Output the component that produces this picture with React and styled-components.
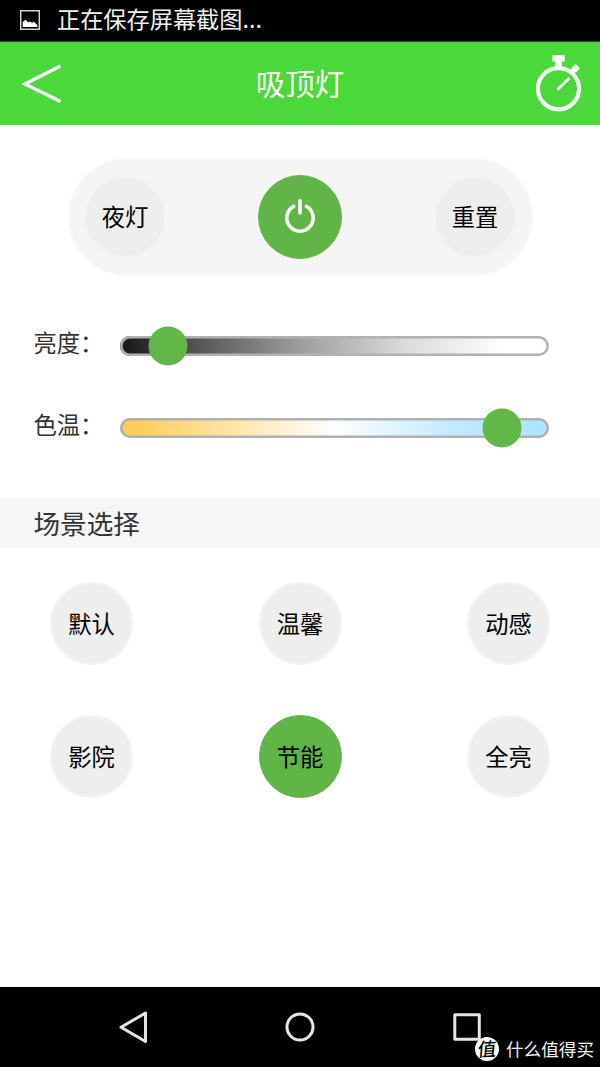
import React from "react";
import styled, { createGlobalStyle } from "styled-components";

const GlobalStyle = createGlobalStyle`
  * { box-sizing: border-box; }
  body {
    margin: 0;
    background: #fff;
    font-family: "Noto Sans CJK SC", "Noto Sans", sans-serif;
  }
  button { font: inherit; border: 0; padding: 0; background: none; }
  svg { display: block; }
`;

const Screen = styled.div`
  width: 600px;
  height: 1067px;
  display: flex;
  flex-direction: column;
  overflow: hidden;
  background: #fff;
`;

const StatusBar = styled.div`
  height: 42px;
  flex: none;
  display: flex;
  align-items: center;
  padding: 0 0 5px 20px;
  gap: 17px;
  background: #000;
  border-bottom: 1px solid #1d4a19;
  color: #f0f0f0;
  font-size: 23.2px;
  line-height: 36px;
  svg { margin-top: 4px; }
`;

const Header = styled.header`
  height: 83px;
  flex: none;
  display: grid;
  grid-template-columns: 100px 1fr 100px;
  align-items: start;
  background: #4ad83a;
  color: #fff;
`;

const Title = styled.h1`
  margin: 18px 0 0;
  font-size: 29.5px;
  font-weight: 400;
  line-height: 44px;
  text-align: center;
`;

const IconButton = styled.button`
  width: 100px;
  height: 83px;
  overflow: hidden;
`;

const PowerPanel = styled.section`
  width: 465px;
  height: 118px;
  flex: none;
  margin: 33px 0 0 68px;
  padding: 0 16px 0 15px;
  border-radius: 59px;
  border: 1px solid #f9f9f9;
  background: #f5f5f5;
  display: flex;
  align-items: center;
  justify-content: space-between;
`;

const RoundButton = styled.button`
  width: ${(p) => p.$size}px;
  height: ${(p) => p.$size}px;
  padding-bottom: ${(p) => (p.$icon ? 0 : 2)}px;
  border-radius: 50%;
  border: ${(p) => (p.$active ? 1 : 2)}px solid ${(p) => (p.$active ? "#61b748" : "#f3f3f3")};
  background: ${(p) => (p.$active ? "#61b546" : "#eee")};
  color: #000;
  display: flex;
  align-items: center;
  justify-content: center;
  font-size: 23.3px;
  line-height: 34px;
`;

const Sliders = styled.section`
  flex: none;
  margin-top: 29px;
  padding-left: 33.5px;
  display: grid;
  grid-auto-rows: 82px;
`;

const SliderRow = styled.div`
  display: flex;
  align-items: center;
  height: 82px;
`;

const SliderLabel = styled.span`
  width: 86.5px;
  margin-top: -9px;
  color: #333;
  font-size: 23.3px;
  line-height: 34px;
  white-space: nowrap;
`;

const Track = styled.div`
  position: relative;
  width: 429px;
  height: 20px;
  border-radius: 10px;
  background: linear-gradient(to right, ${(p) => p.$stops});
  box-shadow: inset 0 0 0 2.6px #b1b0b4;
`;

const Thumb = styled.span`
  position: absolute;
  top: 50%;
  width: 39px;
  height: 39px;
  border-radius: 50%;
  background: #61b748;
  transform: translate(-50%, -50%);
`;

const SectionTitle = styled.h2`
  flex: none;
  height: 50px;
  margin: 29px 0 0;
  padding-left: 33.5px;
  background: #f6f6f6;
  color: #333;
  font-size: 26.6px;
  font-weight: 400;
  line-height: 49px;
`;

const SceneGrid = styled.section`
  flex: 1;
  display: grid;
  grid-template-columns: repeat(3, 83px);
  grid-auto-rows: 83px;
  justify-content: space-between;
  align-content: start;
  row-gap: 50px;
  padding: 34px 50px 0;
`;

const NavBar = styled.nav`
  position: relative;
  height: 80px;
  flex: none;
  background: #000;
  display: flex;
  align-items: center;
  justify-content: space-between;
  padding: 0 116px;
`;

const Watermark = styled.div`
  position: absolute;
  left: 475px;
  top: 50px;
  display: flex;
  align-items: center;
  gap: 7px;
  color: #f4f4f4;
  font-size: 17.6px;
  line-height: 24px;
  white-space: nowrap;
`;

const WatermarkBadge = styled.span`
  width: 24px;
  height: 24px;
  display: flex;
  align-items: center;
  justify-content: center;
  border-radius: 50%;
  background: #fff;
  color: #000;
  font-size: 18.5px;
  font-weight: 500;
  line-height: 24px;
`;

const BadgeGlyph = styled.span`
  transform: translateY(-1px) rotate(-3deg) skewX(-8deg);
`;

const PictureIcon = () => (
  <svg width="20" height="20" viewBox="0 0 20 20">
    <rect x=".75" y=".75" width="18.5" height="18.5" fill="none" stroke="#ddd" strokeWidth="1.4" />
    <path d="M2.7 17V12L5.5 9.7 8.4 12.4 10.2 11.2 12 13 13.8 11.5 17.3 15V17Z" fill="#fff" />
  </svg>
);

const BackIcon = () => (
  <svg width="100" height="83" viewBox="0 1 100 83">
    <path d="M60.5 25 25 43 60.5 60.5" fill="none" stroke="#fff" strokeWidth="3.3" strokeMiterlimit="10" />
  </svg>
);

const StopwatchIcon = () => (
  <svg width="100" height="83" viewBox="0 1 100 83" fill="none" stroke="#fff">
    <circle cx="58.5" cy="47.7" r="20.6" strokeWidth="4.2" />
    <path d="M52.5 14.3H64.8V20.4H61.8V26.5H55.3V20.4H52.5Z" fill="#fff" stroke="none" />
    <path d="M72.2 27 75.8 23.8 79.2 27.2 76 30.6 73.4 30.8 72 29.4Z" fill="#fff" strokeWidth="1.2" strokeLinejoin="round" />
    <path d="M71.8 32 74 29.8" strokeWidth="3.6" />
    <path d="M58.4 47.8 68.6 37.8" strokeWidth="3" strokeLinecap="round" />
  </svg>
);

const PowerIcon = () => (
  <svg width="34" height="38" viewBox="0 0.5 34 38" fill="none" stroke="#fff" strokeLinecap="round">
    <path d="M17 3.2V15.5" strokeWidth="3.6" />
    <path d="M10.6 8.9A13.2 13.2 0 1 0 23.4 8.9" strokeWidth="3.5" />
  </svg>
);

const NavIcon = ({ children }) => (
  <svg width="34" height="34" viewBox="0 0 34 34" fill="none" stroke="#e6e6e6" strokeWidth="3" strokeLinejoin="round">
    {children}
  </svg>
);

const sliders = [
  { label: "亮度：", value: 47.8, stops: "#171717 0%, #242424 4%, #555 18%, #a0a0a0 43%, #dcdcdc 67%, #fff 90%" },
  { label: "色温：", value: 381.5, stops: "#ffcc55 0%, #ffcf5d 5%, #ffe6ae 28%, #fff 50%, #c5eaff 76%, #ace1ff 100%" },
];

const scenes = ["默认", "温馨", "动感", "影院", "节能", "全亮"];

export default function App() {
  return (
    <Screen>
      <GlobalStyle />
      <StatusBar>
        <PictureIcon />
        <span>正在保存屏幕截图...</span>
      </StatusBar>
      <Header>
        <IconButton><BackIcon /></IconButton>
        <Title>吸顶灯</Title>
        <IconButton><StopwatchIcon /></IconButton>
      </Header>
      <PowerPanel>
        <RoundButton $size={82}>夜灯</RoundButton>
        <RoundButton $size={84} $active $icon><PowerIcon /></RoundButton>
        <RoundButton $size={82}>重置</RoundButton>
      </PowerPanel>
      <Sliders>
        {sliders.map((s) => (
          <SliderRow key={s.label}>
            <SliderLabel>{s.label}</SliderLabel>
            <Track $stops={s.stops}>
              <Thumb style={{ left: s.value }} />
            </Track>
          </SliderRow>
        ))}
      </Sliders>
      <SectionTitle>场景选择</SectionTitle>
      <SceneGrid>
        {scenes.map((name) => (
          <RoundButton key={name} $size={83} $active={name === "节能"}>{name}</RoundButton>
        ))}
      </SceneGrid>
      <NavBar>
        <NavIcon><path d="M29.5 3V31.5L5 17.3Z" /></NavIcon>
        <NavIcon><circle cx="17" cy="17" r="13" /></NavIcon>
        <NavIcon><rect x="4.8" y="4.8" width="24.5" height="24.5" /></NavIcon>
        <Watermark>
          <WatermarkBadge><BadgeGlyph>值</BadgeGlyph></WatermarkBadge>
          <span>什么值得买</span>
        </Watermark>
      </NavBar>
    </Screen>
  );
}
